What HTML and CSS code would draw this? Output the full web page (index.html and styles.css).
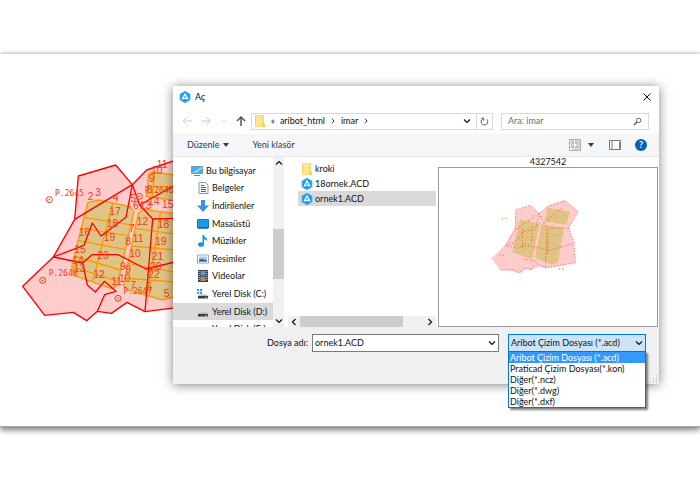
FILE: index.html
```html
<!DOCTYPE html>
<html lang="tr">
<head>
    <meta charset="UTF-8">
    <meta name="viewport" content="width=device-width, initial-scale=1.0">
    <title>Aç</title>
    <link rel="stylesheet" href="styles.css">
</head>
<body>
    <!-- shared icons -->
    <svg class="defs" aria-hidden="true">
        <symbol id="logo" viewBox="0 0 12 12">
            <path d="M6 .5l4.8 2.7v5.6L6 11.5 1.2 8.8V3.2z" fill="#1ba1f2" stroke="#1ba1f2" stroke-linejoin="round"/>
            <path d="M3 8.500L6 3l3 5.500M4.300 7.300h3.400" fill="none" stroke="#fff" stroke-width="1.300"/>
        </symbol>
        <symbol id="folder" viewBox="0 0 12 12">
            <path d="M1.500 0h8v9h1v3h-9z" fill="#ffe48f" stroke="#f0cc60" stroke-width=".8"/>
            <path d="M8.500 12V8.500h2V12z" fill="#f3c94f"/>
        </symbol>
        <symbol id="down" viewBox="0 0 8 8"><path d="M1 2.500l3 3 3-3" fill="none" stroke="currentColor" stroke-width="1.200"/></symbol>
        <symbol id="up" viewBox="0 0 8 8"><path d="M1 5.500l3-3 3 3" fill="none" stroke="currentColor" stroke-width="1.200"/></symbol>
        <symbol id="left" viewBox="0 0 8 8"><path d="M5.500 1l-3 3 3 3" fill="none" stroke="currentColor" stroke-width="1.200"/></symbol>
        <symbol id="right" viewBox="0 0 8 8"><path d="M2.500 1l3 3-3 3" fill="none" stroke="currentColor" stroke-width="1.200"/></symbol>
        <symbol id="caret" viewBox="0 0 8 8"><path d="M1 2h6L4 6z" fill="#1e3c64"/></symbol>
        <symbol id="disk" viewBox="0 0 12 12">
            <path d="M2 6.500h8l1 2H1z" fill="#b9b9b9"/><path d="M1 8h10v2.500H1z" fill="#3c3c3c"/><path d="M8 9h2v1H8z" fill="#5fc45f"/>
        </symbol>
    </svg>

    <main class="slide">
        <svg class="map" viewBox="0 0 510 540">
            <g fill="#fcc" stroke="#fcc">
                <path d="M205 78L317 45l50 59 43-43 110-38v452l-115 10-54-28-47 33-42-6-32 28-40-25-86 9-66-87 92-88 64-113z"/>
            </g>
            <g fill="#dfc487" stroke="#ff9800" stroke-width="4">
                <path d="M233 158l32-8 95 20 12 15-50 220-17 11-115-40-5-26z"/>
                <path d="M385 190l15-12 120 16v238l-62 18-108-32-10-13z"/>
                <path d="M415 75l10-9 95 12v76l-110-14z"/>
                <path fill="none" d="M222 202l150 24M214 235l142 22M203 271l145 28M192 318l140 42M185 350l140 44M308 160l-60 235M379 236l141 20M366 288l154 14M353 340l167 32M345 384l170 14M452 184l-40 245M434 68l-8 74M420 110h100"/>
            </g>
            <g fill="none" stroke="#f00" stroke-width="4" stroke-linejoin="round">
                <path d="M205 78L317 45l50 59-173 104zM194 208l-64 113 92-35 25-67 26 39 75-56 19-98 43-44 110-37"/>
                <path d="M367 104l22 61 131-74M389 165l39 42 92-2M428 207l-23 278M130 321l88 18 28-25h78l84 43 112-27"/>
                <path d="M130 321L38 409l66 87 86-9 40 25 32-28 22-50 34-10-35-30-27 32-24-21-14-66M262 484l42 6 47-33 54 28 115-15"/>
            </g>
            <g fill="none" stroke="#f63c14" stroke-width="3">
                <circle cx="118" cy="149" r="9"/><circle cx="98" cy="391" r="9"/><circle cx="324" cy="445" r="9"/><circle cx="388" cy="139" r="9"/>
                <path d="M116 149h4M96 391h4M322 445h4M386 139h4" stroke-width="4"/>
            </g>
            <g class="parcel">
                <text x="233" y="149">2</text><text x="256" y="137">3</text><text x="308" y="152">4</text><text x="298" y="196">17</text>
                <text x="290" y="231">18</text><text x="281" y="273">19</text><text x="262" y="328">20</text><text x="206" y="258">16</text>
                <text x="193" y="310">15</text><text x="187" y="343">14</text><text x="191" y="366">13</text><text x="250" y="385">12</text>
                <text x="304" y="405">11</text><text x="357" y="246">7</text><text x="346" y="286">8</text><text x="330" y="360">9</text>
                <text x="346" y="370">9</text><text x="327" y="395">10</text><text x="361" y="156">5</text><text x="369" y="176">6</text>
                <text x="389" y="176">13</text><text x="380" y="224">12</text><text x="368" y="276">11</text><text x="358" y="321">10</text>
                <text x="443" y="233">18</text><text x="435" y="286">19</text><text x="425" y="330">21</text><text x="420" y="359">20</text>
                <text x="415" y="384">22</text><text x="361" y="416">7</text><text x="409" y="421">6</text><text x="461" y="441">5</text>
                <text x="440" y="53">11</text><text x="423" y="71">10</text><text x="416" y="97">9</text><text x="410" y="130">8</text>
                <text x="414" y="165">14</text><text x="456" y="174">15</text>
            </g>
            <g class="station">
                <text x="135" y="137">P.2645</text><text x="116" y="379">P.2648</text>
                <text x="340" y="433">P.2647</text><text x="404" y="129">P.2646</text>
            </g>
        </svg>

        <div class="dialog" role="dialog" aria-label="Aç">
            <header class="titlebar">
                <svg class="icon"><use href="#logo"/></svg>
                <h1>Aç</h1>
                <button class="close" aria-label="Kapat"><svg viewBox="0 0 8 8"><path d="M.5.5l7 7M7.500.5l-7 7" stroke="#111" fill="none"/></svg></button>
            </header>

            <nav class="navbar">
                <div class="history">
                    <button class="pale" aria-label="Geri"><svg viewBox="0 0 10 10"><path d="M10 5H1M4.500 1.500L1 5l3.500 3.500" stroke="currentColor" fill="none"/></svg></button>
                    <button class="pale" aria-label="İleri"><svg viewBox="0 0 10 10"><path d="M0 5h9M5.500 1.500L9 5 5.500 8.500" stroke="currentColor" fill="none"/></svg></button>
                    <button class="pale small" aria-label="Son konumlar"><svg><use href="#down"/></svg></button>
                    <button aria-label="Yukarı"><svg viewBox="0 0 10 10"><path d="M5 10V1M1 5l4-4 4 4" stroke="#555" stroke-width="1.500" fill="none"/></svg></button>
                </div>
                <div class="address">
                    <svg class="icon"><use href="#folder"/></svg>
                    <span>«</span>
                    <a href="#">aribot_html</a>
                    <svg class="arrow"><use href="#right"/></svg>
                    <a href="#">imar</a>
                    <svg class="arrow"><use href="#right"/></svg>
                    <button class="drop" aria-label="Adresler"><svg><use href="#down"/></svg></button>
                    <button class="refresh" aria-label="Yenile"><svg viewBox="0 0 10 10"><path d="M7.500 2.500A3.700 3.700 0 1 1 3 2M1.500 1.300H4V4" stroke="#444" fill="none"/></svg></button>
                </div>
                <div class="search">
                    <input type="search" placeholder="Ara: imar" aria-label="Ara: imar">
                    <svg viewBox="0 0 10 10"><path d="M1 9l3.500-3.500" stroke="#555" stroke-width="1.500"/><circle cx="6.200" cy="3.800" r="2.500" fill="none" stroke="#555"/></svg>
                </div>
            </nav>

            <div class="toolbar">
                <button>Düzenle <svg><use href="#caret"/></svg></button>
                <button>Yeni klasör</button>
                <div class="views">
                    <button aria-label="Görünüm">
                        <svg class="grid-icon" viewBox="0 0 12 12"><path d="M.5.5h11v11H.5zM4 .5v11M8 .5v11M.5 4h11M.5 8h11" fill="#fff" stroke="#9a9a9a" stroke-width=".8"/><path d="M2 2h1M6 2h1M2 6h1M6 10h1" stroke="#3277c0"/><path d="M9.500 2h1M9.500 6h1M9.500 10h1" stroke="#b3312b"/></svg>
                        <svg><use href="#caret"/></svg>
                    </button>
                    <button aria-label="Önizleme bölmesi"><svg class="pane-icon" viewBox="0 0 12 10"><path d="M.5.5h11v9H.5zM3 .5v9" fill="#fff" stroke="#777"/><path d="M10.500 2v7" stroke="#4a9be0"/></svg></button>
                    <button class="help" aria-label="Yardım">?</button>
                </div>
            </div>

            <div class="content">
                <div class="tree">
                    <ul>
                        <li class="root"><svg class="icon" viewBox="0 0 12 12"><path d="M.5 1.500h11v7H.5z" fill="#43aee9" stroke="#7598ad"/><path d="M1 8l9-6h1v2L5 8z" fill="#8bd0f5"/><path d="M3 10.500h6" stroke="#6b8797"/></svg>Bu bilgisayar</li>
                        <li><svg class="icon" viewBox="0 0 12 12"><path d="M2 .5h6.500L11 3v8.500H2z" fill="#f7f9fb" stroke="#8a9aa8"/><path d="M4 3.500h3M4 5.500h5M4 7.500h5M4 9.500h5" stroke="#3c6a94"/></svg>Belgeler</li>
                        <li><svg class="icon" viewBox="0 0 12 12"><path d="M4 0h4v5.500h4L6 12 0 5.500h4z" fill="#3d8fe0"/></svg>İndirilenler</li>
                        <li><svg class="icon" viewBox="0 0 12 12"><path d="M.5 1.500h11v8.500H.5z" fill="#179bf0" stroke="#1579bd"/><path d="M1 10h10" stroke="#14527c"/></svg>Masaüstü</li>
                        <li><svg class="icon" viewBox="0 0 12 12"><ellipse cx="4" cy="9.500" rx="3" ry="2.300" fill="#1b93ea"/><path d="M5.500 0h1.500c0 2.500 4 2.500 3.300 6.500C9.500 4.500 8 4.500 7 4.300V9.500H5.500z" fill="#1b93ea"/></svg>Müzikler</li>
                        <li><svg class="icon" viewBox="0 0 12 12"><path d="M.5 2h11v8H.5z" fill="#fff" stroke="#9aa7b0"/><path d="M2 3.500h8v5H2z" fill="#9ccdf0"/><path d="M2 7l3-1 5 1.500v1H2z" fill="#2b5478"/></svg>Resimler</li>
                        <li><svg class="icon" viewBox="0 0 12 12"><path d="M1 0h10v12H1z" fill="#3b4249"/><path d="M3.500 1h5v4.500h-5z" fill="#5e9ad2"/><path d="M3.500 6.500h5V11h-5z" fill="#b08a68"/><path d="M2.200 1v10M9.800 1v10" stroke="#ddd" stroke-dasharray="1"/></svg>Videolar</li>
                        <li><svg class="icon" viewBox="0 0 12 12"><use href="#disk"/><path d="M0 1h2v2H0zM3 1h2v2H3zM0 4h2v2H0zM3 4h2v2H3z" fill="#29a4ec"/></svg>Yerel Disk (C:)</li>
                        <li class="current"><svg class="icon"><use href="#disk"/></svg>Yerel Disk (D:)</li>
                        <li><svg class="icon"></svg>Yerel Disk (E:)</li>
                    </ul>
                </div>
                <div class="vscroll">
                    <svg><use href="#up"/></svg>
                    <div class="thumb"></div>
                    <svg><use href="#down"/></svg>
                </div>
                <div class="files">
                    <ul>
                        <li><svg class="icon"><use href="#folder"/></svg>kroki</li>
                        <li><svg class="icon"><use href="#logo"/></svg>18ornek.ACD</li>
                        <li class="current"><svg class="icon"><use href="#logo"/></svg>ornek1.ACD</li>
                    </ul>
                    <div class="hscroll">
                        <svg><use href="#left"/></svg>
                        <div class="thumb"></div>
                        <svg><use href="#right"/></svg>
                    </div>
                </div>
                <div class="preview">
                    <p>4327542</p>
                    <div class="canvas">
                        <svg viewBox="9 54 660 477">
                            <path fill="#fcc" d="M241 179l46-13 25 25 28-25 50-16 41 35-29 50 16 45 4 60-89 18-28-11-18 15-15-2-19 13-23-8-35-2-28-36 41-40 30-53z"/>
                            <g fill="#dfc487" stroke="#f0a030" stroke-width="2" stroke-dasharray="3 5">
                                <path d="M255 211l58 10-23 107-58-20zM320 225l66 9-18 104-15 7-52-20zM337 175l66 11-9 38-63-9z"/>
                                <path fill="none" d="M249 235l57 10M244 260l57 10M238 285l57 12M284 217l-22 100M316 249l64 10M311 274l64 12M307 299l64 12M350 229l-20 106M370 180l-8 40"/>
                            </g>
                            <g fill="none" stroke="#f22" stroke-width="2" stroke-dasharray="3 6">
                                <path d="M241 239v-60l46-13 25 25-70 47-30 50 34-15 15-25 40-10 11-47M312 191l28-22 50-16 41 32-29 50 16 45 4 60-89 15-28-8-18 12"/>
                                <path d="M312 191l14 29 54-46M326 220l9 16 67-1M336 240l-5 117M210 288l38 8 20-10 80 16 70-22M195 362l35-2 23 10 15-14 20 4 25-10-12-15-40-7"/>
                            </g>
                            <g fill="none" stroke="#f77b10" stroke-width="4" stroke-dasharray="4 6">
                                <path d="M200 209l4-4M210 206h10M192 317h18M372 359h20" opacity=".8"/>
                                <path d="M262 240v60M338 240v80M290 230v50"/>
                            </g>
                        </svg>
                    </div>
                </div>
            </div>

            <footer class="footer">
                <label for="filename">Dosya adı:</label>
                <div class="combo">
                    <input id="filename" type="text" value="ornek1.ACD">
                    <svg><use href="#down"/></svg>
                </div>
                <div class="combo filter">
                    <select aria-label="Dosya türü">
                        <option>Aribot Çizim Dosyası (*.acd)</option>
                    </select>
                    <svg><use href="#down"/></svg>
                    <ul class="options" role="listbox">
                        <li class="selected" role="option" aria-selected="true">Aribot Çizim Dosyası (*.acd)</li>
                        <li role="option">Praticad Çizim Dosyası(*.kon)</li>
                        <li role="option">Diğer(*.ncz)</li>
                        <li role="option">Diğer(*.dwg)</li>
                        <li role="option">Diğer(*.dxf)</li>
                    </ul>
                </div>
                <svg class="grip" viewBox="0 0 8 8"><path d="M6 1h1M3 4h1M6 4h1M0 7h1M3 7h1M6 7h1" stroke="#aaa"/></svg>
            </footer>
        </div>
    </main>
</body>
</html>
```
FILE: styles.css
```css
* {
    box-sizing: border-box;
}

html {
    background: #fff;
}

body {
    margin: 0;
    padding: 54px 0 20px;
    color: #111;
    font: 9px/12px Lato, "Open Sans", sans-serif;
}

button, input, select {
    margin: 0;
    padding: 0;
    border: 0;
    background: none;
    color: inherit;
    font: inherit;
}

ul, h1, p {
    margin: 0;
    padding: 0;
    font: inherit;
    list-style: none;
}

a {
    color: inherit;
    text-decoration: none;
}

svg {
    display: block;
    flex: none;
    width: 8px;
    height: 8px;
}

.defs {
    position: absolute;
    width: 0;
    height: 0;
}

.icon {
    width: 12px;
    height: 12px;
}

.slide {
    position: relative;
    padding: 32px 41px 42px 173px;
    background: #fff;
    border-bottom: 1px solid #a8a8a8;
    box-shadow: 0 -1px 3px rgba(0, 0, 0, 0.2), 0 3px 6px rgba(0, 0, 0, 0.5);
}

/* parcel map behind the dialog */
.map {
    position: absolute;
    left: 10px;
    top: 96px;
    width: 170px;
    height: 180px;
}

.map text {
    fill: #f63c14;
    font-family: "Liberation Sans", sans-serif;
    font-size: 31px;
}

.map .station text {
    font-family: "DejaVu Sans Mono", monospace;
    font-size: 24px;
}

.dialog {
    position: relative;
    background: #fff;
    box-shadow: 0 1px 10px rgba(0, 0, 0, 0.5);
}

.titlebar {
    display: flex;
    align-items: center;
    gap: 4px;
    height: 22px;
    padding: 0 8px 0 6px;
}

.close {
    margin-left: auto;
}

/* address row */
.navbar {
    display: flex;
    align-items: center;
    height: 26px;
    padding-right: 10px;
}

.history {
    display: flex;
    align-items: center;
    justify-content: space-between;
    width: 78px;
    padding: 0 5px 0 9px;
}

.history svg {
    width: 10px;
    height: 10px;
}

.history .small svg {
    width: 6px;
    height: 6px;
}

.pale {
    color: #ccc;
}

.address {
    display: flex;
    flex: 1;
    align-items: center;
    gap: 5px;
    height: 17px;
    padding-left: 2px;
    border: 1px solid #d9d9d9;
}

.arrow {
    width: 6px;
    height: 6px;
}

.drop {
    margin-left: auto;
}

.refresh {
    height: 15px;
    padding: 0 3px;
    border-left: 1px solid #d9d9d9;
}

.refresh svg {
    width: 9px;
    height: 9px;
}

.search {
    display: flex;
    align-items: center;
    width: 148px;
    height: 17px;
    margin-left: 8px;
    padding: 0 6px;
    border: 1px solid #d9d9d9;
}

.search input {
    flex: 1;
    min-width: 0;
}

.search input::placeholder {
    color: #6d6d6d;
}

.search svg {
    width: 9px;
    height: 9px;
}

.toolbar {
    display: flex;
    align-items: center;
    gap: 22px;
    height: 23px;
    padding: 0 12px 0 14px;
    background: #f5f6f7;
    border-bottom: 1px solid #e8e8e8;
    color: #1e3c64;
}

.toolbar button {
    display: flex;
    align-items: center;
    gap: 3px;
}

.views {
    display: flex;
    align-items: center;
    gap: 14px;
    margin-left: auto;
}

.views button:first-child {
    gap: 6px;
}

.grid-icon {
    width: 12px;
    height: 12px;
}

.pane-icon {
    width: 12px;
    height: 10px;
}

.toolbar .help {
    justify-content: center;
    width: 12px;
    height: 12px;
    border-radius: 50%;
    background: #0b5cbe;
    color: #fff;
    font-weight: bold;
}

/* tree, file list and preview */
.content {
    display: flex;
    height: 170px;
}

.tree {
    width: 100px;
    padding-top: 5px;
    overflow: hidden;
}

.tree ul {
    display: grid;
    grid-auto-rows: 1fr;
    height: 176px;
}

.tree li {
    display: flex;
    align-items: center;
    gap: 3px;
    padding-left: 24px;
    white-space: nowrap;
}

.tree .root {
    padding-left: 18px;
}

.tree .current,
.files .current {
    background: #d9d9d9;
}

.vscroll {
    display: flex;
    flex-direction: column;
    align-items: center;
    width: 11px;
    padding: 2px 0;
    background: #f0f0f0;
}

.vscroll .thumb {
    width: 11px;
    height: 50px;
    margin: 62px 0 auto;
    background: #cdcdcd;
}

.files {
    display: flex;
    flex: 1;
    flex-direction: column;
    justify-content: space-between;
    padding: 4px 2px 0 4px;
}

.files li {
    display: flex;
    align-items: center;
    gap: 2px;
    height: 15px;
    margin-left: 10px;
    padding-left: 3px;
}

.hscroll {
    display: flex;
    align-items: center;
    height: 11px;
    padding: 0 2px;
    background: #f0f0f0;
}

.hscroll .thumb {
    flex: 1;
    height: 11px;
    margin: 0 23px 0 2px;
    background: #cdcdcd;
}

.preview {
    display: flex;
    flex-direction: column;
    width: 221px;
    padding-right: 1px;
}

.preview p {
    height: 10px;
    line-height: 10px;
    text-align: center;
}

.canvas {
    flex: 1;
    border: 1px solid #9a9a9e;
}

.canvas svg {
    width: 100%;
    height: 100%;
}

.footer {
    display: flex;
    align-items: flex-start;
    height: 57px;
    padding: 7px 13px 0 0;
    background: #f0f0f0;
}

.footer label {
    width: 139px;
    padding: 3px 4px 0 0;
    text-align: right;
}

.combo {
    position: relative;
    display: flex;
    flex: 1;
    align-items: center;
    height: 18px;
    padding: 0 2px;
    background: #fff;
    border: 1px solid #7a7a7a;
}

.combo input,
.combo select {
    flex: 1;
    min-width: 0;
    appearance: none;
}

.filter {
    flex: none;
    width: 138px;
    margin-left: 9px;
    background: #cce4f7;
    border-color: #0078d7;
}

.options {
    position: absolute;
    left: -1px;
    right: -1px;
    top: 16px;
    background: #fff;
    border: 1px solid #0078d7;
    box-shadow: 2px 2px 2px rgba(0, 0, 0, 0.5);
    line-height: 11px;
}

.options li {
    padding-left: 1px;
}

.options .selected {
    background: #3399ff;
    color: #fff;
}

.grip {
    position: absolute;
    right: 1px;
    bottom: 1px;
}
```
